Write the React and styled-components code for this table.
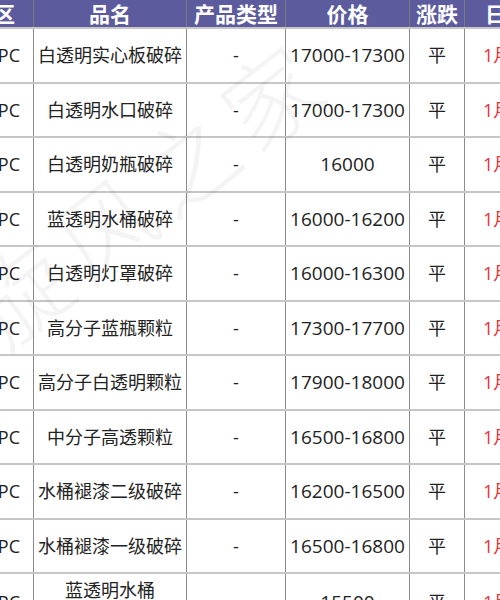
import React from "react";
import styled, { createGlobalStyle } from "styled-components";

const GlobalStyle = createGlobalStyle`
  html, body {
    margin: 0;
    padding: 0;
    background: #ffffff;
  }
  body {
    font-family: "Open Sans", "Noto Sans CJK SC", sans-serif;
  }
`;

const Frame = styled.div`
  position: relative;
  width: 500px;
  height: 600px;
  overflow: hidden;
  background: #fff;
`;

const Table = styled.table`
  width: 611px;
  min-width: 611px;
  margin-left: -47px;
  border-collapse: collapse;
  table-layout: fixed;
  font-size: 18px;
  color: #222;
`;

const HeadCell = styled.th`
  box-sizing: border-box;
  width: ${(p) => p.$w}px;
  height: 27px;
  padding: 0;
  padding-left: ${(p) => p.$pl || 0}px;
  padding-right: ${(p) => p.$pr || 0}px;
  background: #5c5b9d;
  color: #fff;
  font-family: "Noto Sans CJK SC", sans-serif;
  font-size: 21px;
  font-weight: 700;
  line-height: 27px;
  text-align: ${(p) => p.$align || "center"};
  border-left: 1px solid #7a7a7a;
  border-right: 1px solid #7a7a7a;
  white-space: nowrap;
  overflow: hidden;
`;

const Row = styled.tr`
  height: ${(p) => p.$h || 54.5}px;
`;

const Cell = styled.td`
  box-sizing: border-box;
  padding: 0;
  padding-left: ${(p) => p.$pl || 0}px;
  padding-right: ${(p) => p.$pr || 0}px;
  text-align: ${(p) => p.$align || "center"};
  vertical-align: middle;
  border-left: 1px solid #8a8a8a;
  border-right: 1px solid #8a8a8a;
  border-top: 2px solid #c6c6c6;
  font-size: ${(p) => p.$size || 18}px;
  line-height: 24px;
  color: ${(p) => (p.$red ? "#e6323c" : "#222")};
  white-space: nowrap;
  overflow: hidden;
`;

const Watermark = styled.div`
  position: absolute;
  left: -20px;
  top: 250px;
  font-size: 96px;
  font-family: "Noto Sans CJK SC", sans-serif;
  font-weight: 300;
  letter-spacing: 10px;
  color: rgba(0, 0, 0, 0.045);
  transform: rotate(-38deg);
  transform-origin: left center;
  pointer-events: none;
  white-space: nowrap;
`;

const rows = [
  ["白透明实心板破碎", "17000-17300"],
  ["白透明水口破碎", "17000-17300"],
  ["白透明奶瓶破碎", "16000"],
  ["蓝透明水桶破碎", "16000-16200"],
  ["白透明灯罩破碎", "16000-16300"],
  ["高分子蓝瓶颗粒", "17300-17700"],
  ["高分子白透明颗粒", "17900-18000"],
  ["中分子高透颗粒", "16500-16800"],
  ["水桶褪漆二级破碎", "16200-16500"],
  ["水桶褪漆一级破碎", "16500-16800"],
];

export default function App() {
  return (
    <Frame>
      <GlobalStyle />
      <Table>
        <thead>
          <tr>
            <HeadCell $w={80} $align="right" $pr={18}>地区</HeadCell>
            <HeadCell $w={153}>品名</HeadCell>
            <HeadCell $w={99}>产品类型</HeadCell>
            <HeadCell $w={124}>价格</HeadCell>
            <HeadCell $w={55}>涨跌</HeadCell>
            <HeadCell $w={100} $align="left" $pl={20}>日期</HeadCell>
          </tr>
        </thead>
        <tbody>
          {rows.map(([name, price]) => (
            <Row key={name}>
              <Cell $align="right" $pr={13}>PC</Cell>
              <Cell>{name}</Cell>
              <Cell>-</Cell>
              <Cell $size={19}>{price}</Cell>
              <Cell>平</Cell>
              <Cell $red $align="left" $pl={18}>1月9日</Cell>
            </Row>
          ))}
          <Row $h={56}>
            <Cell $align="right" $pr={13}>PC</Cell>
            <Cell>
              蓝透明水桶
              <br />
              破碎
            </Cell>
            <Cell>-</Cell>
            <Cell $size={19}>15500</Cell>
            <Cell>平</Cell>
            <Cell $red $align="left" $pl={18}>1月9日</Cell>
          </Row>
        </tbody>
      </Table>
      <Watermark>旋风之家</Watermark>
    </Frame>
  );
}
